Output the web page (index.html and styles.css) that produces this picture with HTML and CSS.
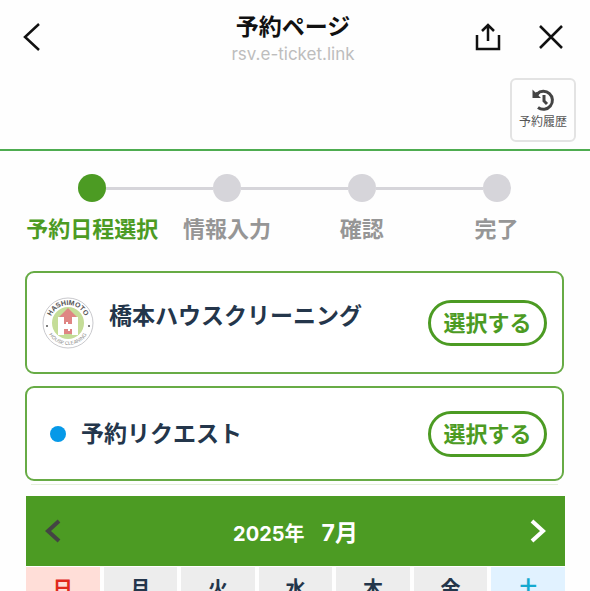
FILE: index.html
```html
<!DOCTYPE html>
<html lang="ja">
<head>
  <meta charset="utf-8">
  <meta name="viewport" content="width=device-width, initial-scale=1">
  <title>予約ページ</title>
  <link rel="stylesheet" href="styles.css">
</head>
<body>
  <header class="browser-bar">
    <button class="icon-button back" aria-label="戻る">
      <svg width="18" height="30" viewBox="0 0 18 30"><path d="M17 2L3 15l14 13" /></svg>
    </button>
    <div class="page-title">
      <h1>予約ページ</h1>
      <p>rsv.e-ticket.link</p>
    </div>
    <div class="bar-actions">
      <button class="icon-button" aria-label="共有">
        <svg width="26" height="28" viewBox="0 0 26 28"><path d="M2 12v14h22V12M13 18V2M7 8l6-6 6 6" /></svg>
      </button>
      <button class="icon-button" aria-label="閉じる">
        <svg width="26" height="26" viewBox="0 0 26 26"><path d="M2 2l22 22M24 2L2 24" /></svg>
      </button>
    </div>
  </header>

  <div class="history-bar">
    <button class="history-button">
      <svg width="24" height="24" viewBox="0 0 24 24">
        <path class="stroke" d="M6 6A9 9 0 1 1 7 19.500M13 7v6l3 3" />
        <path class="fill" d="M1.500 1.500v8.500H10L7.500 7.500 9 5 6 4 4.500 4.500z" />
      </svg>
      <span>予約履歴</span>
    </button>
  </div>

  <main>
    <ol class="steps">
      <li class="active">予約日程選択</li>
      <li>情報入力</li>
      <li>確認</li>
      <li>完了</li>
    </ol>

    <section class="card shop">
      <svg class="logo" width="52" height="52" viewBox="0 0 52 52">
        <defs>
          <path id="arc-top" d="M8.260 29A18 18 0 1 1 43.740 29" />
          <path id="arc-bottom" d="M4 26a22 22 0 0 0 44 0" />
        </defs>
        <circle cx="26" cy="26" r="25" fill="#fff" stroke="#c9c9cd" />
        <circle cx="26" cy="26" r="16" fill="#c5dd98" />
        <path d="M26 11l9 9h-4v17H21V20h-4z" fill="#df8583" />
        <path d="M16 20h6v7h2v-2h2v2h4v-7h6v18h-6v-6h-2v2h-2v-2h-4v6h-6z" fill="#fff" />
        <circle cx="5" cy="29" r="1" fill="#555" />
        <circle cx="47" cy="29" r="1" fill="#555" />
        <text class="logo-name"><textPath href="#arc-top" startOffset="50%">HASHIMOTO</textPath></text>
        <text class="logo-sub"><textPath href="#arc-bottom" startOffset="50%">HOUSE CLEANING</textPath></text>
      </svg>
      <h2>橋本ハウスクリーニング</h2>
      <button class="select-button">選択する</button>
    </section>

    <section class="card menu">
      <span class="dot"></span>
      <h2>予約リクエスト</h2>
      <button class="select-button">選択する</button>
    </section>

    <div class="divider"></div>

    <section class="calendar">
      <div class="month-bar">
        <button class="month-button prev" aria-label="前の月">
          <svg width="18" height="24" viewBox="0 0 18 24"><path d="M15 2L4 12l11 10" /></svg>
        </button>
        <p><span class="year">2025年</span><span class="month">7月</span></p>
        <button class="month-button" aria-label="次の月">
          <svg width="18" height="24" viewBox="0 0 18 24"><path d="M3 2l11 10L3 22" /></svg>
        </button>
      </div>
      <table>
        <thead>
          <tr>
            <th class="sun">日</th>
            <th>月</th>
            <th>火</th>
            <th>水</th>
            <th>木</th>
            <th>金</th>
            <th class="sat">土</th>
          </tr>
        </thead>
      </table>
    </section>
  </main>
</body>
</html>
```
FILE: styles.css
```css
* {
  box-sizing: border-box;
}

body {
  margin: 0;
  height: 100vh;
  overflow: hidden;
  background: #fefefe;
  color: #24364b;
  font-family: Inter, "Noto Sans CJK JP", sans-serif;
}

h1, h2, p, ol {
  margin: 0;
  padding: 0;
}

button {
  padding: 0;
  background: none;
  border: none;
  font-family: inherit;
  cursor: pointer;
}

svg {
  display: block;
  fill: none;
}

/* top bar */
.browser-bar {
  display: grid;
  grid-template-columns: 1fr auto 1fr;
  align-items: center;
  height: 74px;
  padding: 0 26px 0 22px;
}

.icon-button {
  justify-self: start;
}

.icon-button svg {
  stroke: #111;
  stroke-width: 2.5;
}

.page-title {
  padding-top: 4px;
  text-align: center;
}

.page-title h1 {
  color: #111;
  font-size: 23px;
  line-height: 30px;
  font-weight: 700;
}

.page-title p {
  color: #bdbdbd;
  font-size: 17px;
  line-height: 24px;
}

.bar-actions {
  display: flex;
  justify-content: flex-end;
  align-items: center;
  gap: 37px;
}

.history-bar {
  display: flex;
  justify-content: flex-end;
  padding: 4px 14px 7px;
  border-bottom: 2px solid #4eac50;
}

.history-button {
  display: flex;
  flex-direction: column;
  align-items: center;
  justify-content: center;
  width: 66px;
  height: 64px;
  border: 2px solid #e3e3e3;
  border-radius: 6px;
  color: #555;
  font-size: 12px;
  line-height: 20px;
}

.history-button .stroke {
  stroke: #444;
  stroke-width: 3;
}

.history-button .fill {
  fill: #444;
}

main {
  padding: 23px 26px 0 25px;
}

/* steps */
.steps {
  display: flex;
  list-style: none;
  margin-bottom: 27px;
}

.steps li {
  flex: 1;
  position: relative;
  color: #969696;
  font-size: 22px;
  line-height: 30px;
  font-weight: 700;
  text-align: center;
  white-space: nowrap;
}

.steps li::before {
  content: "";
  display: block;
  width: 28px;
  height: 28px;
  margin: 0 auto 12px;
  border-radius: 50%;
  background: #d6d5da;
}

.steps li + li::after {
  content: "";
  position: absolute;
  top: 13px;
  right: calc(50% + 14px);
  width: calc(100% - 28px);
  height: 3px;
  background: #d6d5da;
}

.steps .active {
  color: #4c9b23;
}

.steps .active::before {
  background: #4c9b23;
}

/* cards */
.card {
  display: flex;
  align-items: center;
  margin-bottom: 12px;
  padding: 0 15px;
  border: 2px solid #67ab45;
  border-radius: 9px;
  background: #fff;
}

.card h2 {
  flex: 1;
  font-size: 23px;
  line-height: 32px;
  font-weight: 700;
}

.shop {
  height: 103px;
}

.shop h2 {
  margin: 0 0 14px 15px;
}

.menu {
  height: 95px;
  padding-left: 23px;
  margin-bottom: 3px;
}

.menu h2 {
  margin-left: 15px;
}

.dot {
  width: 16px;
  height: 16px;
  border-radius: 50%;
  background: #0699e8;
}

.logo text {
  fill: #555;
  text-anchor: middle;
  font-family: "Liberation Sans", sans-serif;
}

.logo .logo-name {
  font-size: 7px;
  font-weight: 700;
}

.logo .logo-sub {
  fill: #888;
  font-size: 5px;
}

.select-button {
  width: 119px;
  height: 46px;
  border: 3px solid #4c9b23;
  border-radius: 23px;
  background: #fff;
  color: #4c9b23;
  font-size: 22px;
  line-height: 32px;
  font-weight: 700;
}

.divider {
  height: 1px;
  margin: 0 6px 11px;
  background: #e4efdc;
}

/* calendar */
.calendar {
  margin: 0 -1px 0 1px;
  overflow: hidden;
}

.month-bar {
  display: flex;
  align-items: center;
  justify-content: space-between;
  height: 70px;
  padding: 0 18px;
  background: #4c9b23;
  color: #fff;
  font-weight: 700;
}

.month-bar p {
  display: flex;
  align-items: baseline;
  gap: 17px;
}

.year {
  font-size: 20px;
}

.month {
  font-size: 23px;
}

.month-button svg {
  stroke: #fff;
  stroke-width: 4;
}

.month-button.prev svg {
  stroke: #444;
}

.calendar table {
  width: calc(100% + 8px);
  margin: 0 -4px;
  table-layout: fixed;
  border-collapse: separate;
  border-spacing: 4px 0;
}

.calendar th {
  height: 44px;
  padding: 0;
  border-top: 1px solid #fff;
  background: #ededed;
  font-size: 20px;
  line-height: 30px;
  font-weight: 700;
}

.calendar .sun {
  background: #ffded8;
  color: #e0291d;
}

.calendar .sat {
  background: #e1f2ff;
  color: #14a9cf;
}
```
